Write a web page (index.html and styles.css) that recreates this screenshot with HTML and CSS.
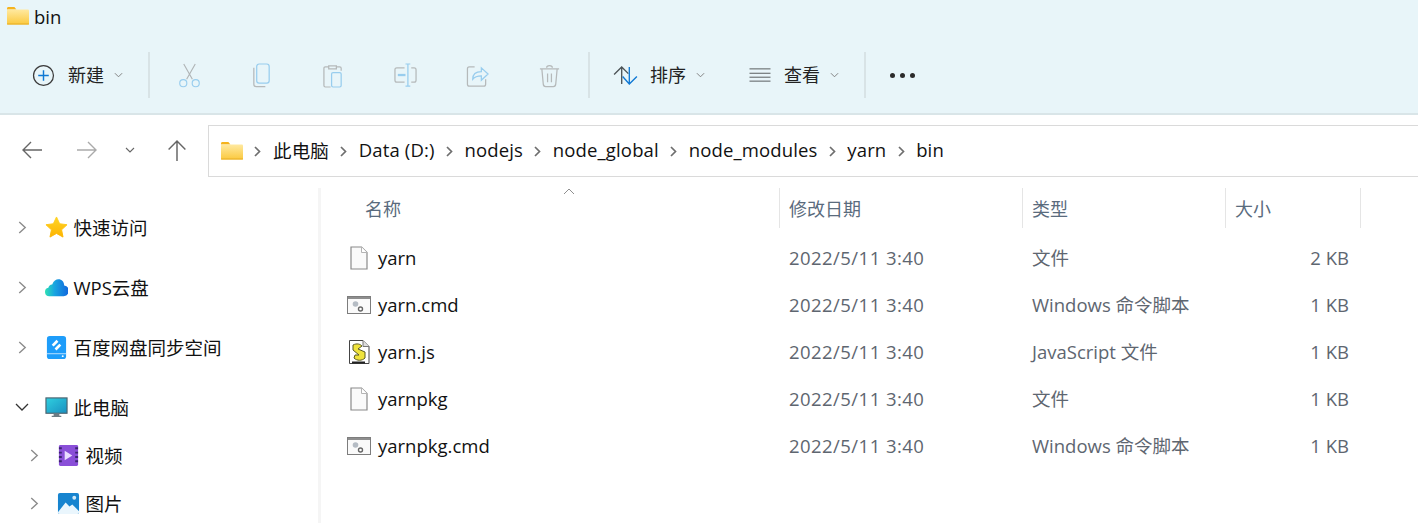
FILE: index.html
```html
<!DOCTYPE html>
<html lang="zh-CN">
<head>
  <meta charset="UTF-8" />
  <title>bin</title>
  <link rel="stylesheet" href="styles.css">
</head>
<body>
  <svg class="defs" width="0" height="0">
    <defs>
      <linearGradient id="folderFill" x1="0" y1="0" x2="0" y2="1">
        <stop offset="0" stop-color="#ffe9a0" />
        <stop offset="1" stop-color="#fbc93e" />
      </linearGradient>
      <linearGradient id="starFill" x1="0" y1="0" x2="0" y2="1">
        <stop offset="0" stop-color="#ffd427" />
        <stop offset="1" stop-color="#fdb400" />
      </linearGradient>
      <linearGradient id="cloudFill" x1="0" y1="0" x2="1" y2="0">
        <stop offset="0" stop-color="#2ee0b4" />
        <stop offset="0.4" stop-color="#18a5e0" />
        <stop offset="1" stop-color="#1166dd" />
      </linearGradient>
      <linearGradient id="screenFill" x1="0" y1="0" x2="1" y2="1">
        <stop offset="0" stop-color="#2fd0e0" />
        <stop offset="1" stop-color="#1a8fc0" />
      </linearGradient>
      <symbol id="folder" viewBox="0 0 22 18">
        <path d="M0 1.500C0 .7.6 0 1.400 0h6l2 2.500H0z" fill="#f5b31d" />
        <rect x="0" y="2.500" width="22" height="15" rx="1" fill="url(#folderFill)" />
        <rect x="0" y="16.500" width="22" height="1" fill="#e8ad24" />
      </symbol>
      <symbol id="blank" viewBox="0 0 18 24">
        <path d="M1 1h10.500L17 6.500V23H1z" fill="#fafafa" stroke="#8a8a8a" stroke-width="1.200" />
        <path d="M11.500 1v5.500H17" fill="#fff" stroke="#b4b4b4" />
      </symbol>
      <symbol id="cmd" viewBox="0 0 24 18">
        <rect x=".5" y=".5" width="23" height="17" fill="#fafafa" stroke="#7d7d7d" />
        <rect x="1" y="1" width="22" height="2" fill="#8e8e8e" />
        <circle cx="8.500" cy="8" r="2.800" fill="#b5bcc4" />
        <circle cx="13.500" cy="13" r="2" fill="#fff" stroke="#666" stroke-width="1.400" />
      </symbol>
      <symbol id="script" viewBox="0 0 21 24">
        <path d="M.5.500H14l6 6v17H.500z" fill="#fff" stroke="#444" />
        <path d="M14 .5v6h6" fill="#ddd" stroke="#777" />
        <path d="M4 5c4-2 7-1 9 1l-4 3 7 3v6c-3 3-8 3-11 0l1-3h4L4 10z" fill="#efe33c" stroke="#5a5a20" />
        <path d="M3 21.500h13v2H3z" fill="#222" />
      </symbol>
      <symbol id="crumb" viewBox="0 0 7 11">
        <path d="M1 1l4.500 4.500L1 10" fill="none" stroke="#6e6e6e" stroke-width="1.700" />
      </symbol>
    </defs>
  </svg>

  <header class="ribbon">
    <div class="title-row">
      <svg class="icon-folder"><use href="#folder" /></svg>
      <span class="title-text">bin</span>
    </div>
    <div class="toolbar">
      <div class="tool tool-new">
        <svg class="tool-icon" viewBox="0 0 24 24" fill="none">
          <circle cx="12" cy="12" r="10.400" stroke="#3c3c3c" stroke-width="1.300" />
          <path d="M12 6.500v11M6.500 12h11" stroke="#0f78d4" stroke-width="1.500" />
        </svg>
        <span class="tool-label">新建</span>
        <svg class="caret" viewBox="0 0 10 6" fill="none"><path d="M1 1l4 4 4-4" stroke="#777" /></svg>
      </div>
      <i class="sep sep-a"></i>
      <div class="tool-set">
        <svg class="tool-icon" viewBox="0 0 24 26" fill="none" stroke-width="1.200">
          <path d="M6 1l9 16M18 1L9 17" stroke="#b0b5b7" />
          <circle cx="5.500" cy="21" r="3.700" stroke="#98cdee" />
          <circle cx="18.500" cy="21" r="3.700" stroke="#98cdee" />
        </svg>
        <svg class="tool-icon" viewBox="0 0 24 26" fill="none" stroke-width="1.300">
          <path d="M4 5v17c0 1.500 1 2.500 2.500 2.500H16" stroke="#b5b9ba" />
          <rect x="7" y="1" width="13" height="20" rx="2.500" stroke="#98cdee" />
        </svg>
        <svg class="tool-icon" viewBox="0 0 24 26" fill="none" stroke-width="1.300">
          <path d="M7 4H3.500C2.500 4 2 4.500 2 5.500v18c0 1 .5 1.500 1.500 1.500H9M15 4h3.500c1 0 1.500.5 1.500 1.500V8M7 3h8v3H7z" stroke="#b5b9ba" />
          <rect x="10" y="10" width="10" height="15" rx="1.500" stroke="#98cdee" />
        </svg>
        <svg class="tool-icon" viewBox="0 0 24 26" fill="none" stroke-width="1.300">
          <path d="M11 5H3C1.500 5 1 6 1 7v11c0 1 .5 2 2 2h8M18 5h3c1.500 0 2 1 2 2v11c0 1-.5 2-2 2h-3" stroke="#b5b9ba" />
          <path d="M4 12.500h8" stroke="#98cdee" stroke-width="2.400" />
          <path d="M12 1h5M12 24h5M14.500 1v23" stroke="#98cdee" />
        </svg>
        <svg class="tool-icon" viewBox="0 0 24 26" fill="none" stroke-width="1.300">
          <path d="M9 4H3.500C2 4 1.500 5 1.500 6v16c0 1 .5 2 2 2h15c1.500 0 2-1 2-2v-5" stroke="#b5b9ba" />
          <path d="M7 17c0-5 3-8 9-8V5l7 6.500L16 18v-4.500c-4 0-7 1-9 3.500z" stroke="#98cdee" />
        </svg>
        <svg class="tool-icon" viewBox="0 0 24 26" fill="none" stroke="#b5b9ba" stroke-width="1.300">
          <path d="M2 6h20M9 5c0-3 6-3 6 0M4 6l1.500 16c.1 1.500 1 2.500 2.500 2.500h8c1.500 0 2.400-1 2.500-2.500L20 6M10 11v9M14 11v9" />
        </svg>
      </div>
      <i class="sep sep-b"></i>
      <div class="tool tool-sort">
        <svg class="tool-icon" viewBox="0 0 26 20" fill="none" stroke-width="1.400">
          <path d="M9 19V1.500M1 9l8-8 7 7" stroke="#4c5356" />
          <path d="M17 1v17.500M10 11l7 8 8-8" stroke="#0f78d4" />
        </svg>
        <span class="tool-label">排序</span>
        <svg class="caret" viewBox="0 0 10 6" fill="none"><path d="M1 1l4 4 4-4" stroke="#777" /></svg>
      </div>
      <div class="tool tool-view">
        <svg class="tool-icon" viewBox="0 0 24 16" fill="none" stroke="#53585a" stroke-width="1.100">
          <path d="M0 1h24M0 6h24M0 10.500h24M0 15h24" />
        </svg>
        <span class="tool-label">查看</span>
        <svg class="caret" viewBox="0 0 10 6" fill="none"><path d="M1 1l4 4 4-4" stroke="#777" /></svg>
      </div>
      <i class="sep sep-c"></i>
      <div class="more"><b></b><b></b><b></b></div>
    </div>
  </header>

  <div class="nav-row">
    <div class="nav-buttons">
      <svg class="nav-back" viewBox="0 0 20 18" fill="none" stroke="#666" stroke-width="1.400"><path d="M20 9H1M9 1L1 9l8 8" /></svg>
      <svg class="nav-forward" viewBox="0 0 20 18" fill="none" stroke="#aaa" stroke-width="1.400"><path d="M0 9h19M11 1l8 8-8 8" /></svg>
      <svg class="nav-recent" viewBox="0 0 10 6" fill="none"><path d="M1 1l4 4 4-4" stroke="#666" stroke-width="1.100" /></svg>
      <svg class="nav-up" viewBox="0 0 18 20" fill="none" stroke="#666" stroke-width="1.400"><path d="M9 20V1M1 9l8-8 8 8" /></svg>
    </div>
    <div class="address">
      <svg class="icon-folder address-folder"><use href="#folder" /></svg>
      <svg class="crumb-sep"><use href="#crumb" /></svg><span class="crumb">此电脑</span>
      <svg class="crumb-sep"><use href="#crumb" /></svg><span class="crumb">Data (D:)</span>
      <svg class="crumb-sep"><use href="#crumb" /></svg><span class="crumb">nodejs</span>
      <svg class="crumb-sep"><use href="#crumb" /></svg><span class="crumb">node_global</span>
      <svg class="crumb-sep"><use href="#crumb" /></svg><span class="crumb">node_modules</span>
      <svg class="crumb-sep"><use href="#crumb" /></svg><span class="crumb">yarn</span>
      <svg class="crumb-sep"><use href="#crumb" /></svg><span class="crumb">bin</span>
    </div>
  </div>

  <div class="main">
    <aside class="sidebar">
      <div class="side-item">
        <svg class="chev" viewBox="0 0 8 12" fill="none"><path d="M1 1l5.500 5L1 11" stroke="#8c8c8c" stroke-width="1.300" /></svg>
        <svg class="side-icon" viewBox="0 0 24 24"><path d="M12 1l3.300 7.100 7.700 1-5.700 5.300 1.500 7.600-6.800-3.800L5.200 22l1.500-7.600L1 9.100l7.700-1z" fill="url(#starFill)" stroke="url(#starFill)" stroke-linejoin="round" /></svg>
        <span>快速访问</span>
      </div>
      <div class="side-item">
        <svg class="chev" viewBox="0 0 8 12" fill="none"><path d="M1 1l5.500 5L1 11" stroke="#8c8c8c" stroke-width="1.300" /></svg>
        <svg class="side-icon" viewBox="0 0 24 24"><path d="M4.500 21a4.400 4.400 0 0 1-1-8.700C4 10 5.500 8.700 7.500 8.800 9 5.300 11.500 3.500 14 3.500c3.500 0 6 2.600 6 6.400a5.600 5.600 0 0 1-.5 11.100z" fill="url(#cloudFill)" /></svg>
        <span>WPS云盘</span>
      </div>
      <div class="side-item">
        <svg class="chev" viewBox="0 0 8 12" fill="none"><path d="M1 1l5.500 5L1 11" stroke="#8c8c8c" stroke-width="1.300" /></svg>
        <svg class="side-icon" viewBox="0 0 24 24">
          <rect x="2" y="0" width="20" height="24" rx="3" fill="#1e9dfa" />
          <path d="M12 4l-5 5 2 2 3-3 2-2zM12 15l5-5-2-2-3 3-2 2z" fill="#fff" />
          <path d="M2 18.500h20" stroke="#bfe3ff" />
          <circle cx="18.500" cy="21" r="1" fill="#fff" />
        </svg>
        <span>百度网盘同步空间</span>
      </div>
      <div class="side-item side-pc">
        <svg class="chev chev-open" viewBox="0 0 14 8" fill="none"><path d="M1 1l6 6 6-6" stroke="#333" stroke-width="1.300" /></svg>
        <svg class="side-icon" viewBox="0 0 24 24">
          <rect x="1" y="2" width="22" height="16" fill="url(#screenFill)" stroke="#4d6470" stroke-width="1.200" />
          <path d="M9 18.500h6v2H9zM7 20.500h10V22H7z" fill="#6d7c84" />
        </svg>
        <span>此电脑</span>
      </div>
      <div class="side-item side-sub">
        <svg class="chev" viewBox="0 0 8 12" fill="none"><path d="M1 1l5.500 5L1 11" stroke="#8c8c8c" stroke-width="1.300" /></svg>
        <svg class="side-icon" viewBox="0 0 24 24">
          <rect x="2" y="1" width="20" height="22" rx="1.500" fill="#8a4fd8" />
          <path d="M2 4.500h3M2 9h3M2 13.500h3M2 18h3M19 4.500h3M19 9h3M19 13.500h3M19 18h3" stroke="#3c2470" stroke-width="2" />
          <path d="M8 7v10l8-5z" fill="#eadcff" />
        </svg>
        <span>视频</span>
      </div>
      <div class="side-item side-sub">
        <svg class="chev" viewBox="0 0 8 12" fill="none"><path d="M1 1l5.500 5L1 11" stroke="#8c8c8c" stroke-width="1.300" /></svg>
        <svg class="side-icon" viewBox="0 0 24 24">
          <rect x="1" y="1" width="22" height="22" rx="2" fill="#1784cf" />
          <path d="M1 21l8-10 4 4 3-2 7 7v1a2 2 0 0 1-2 2H3a2 2 0 0 1-2-2z" fill="#eaf6fd" />
          <circle cx="18" cy="6" r="2" fill="#cfe9f9" />
        </svg>
        <span>图片</span>
      </div>
    </aside>

    <section class="files">
      <svg class="sort-mark" viewBox="0 0 12 7" fill="none"><path d="M1 6l5-5 5 5" stroke="#8f8f8f" /></svg>
      <div class="file-head file-grid">
        <div class="head-cell head-name">名称</div>
        <div class="head-cell">修改日期</div>
        <div class="head-cell">类型</div>
        <div class="head-cell">大小</div>
      </div>
      <div class="file-row file-grid">
        <div class="file-name"><span class="file-icon"><svg class="ico-blank"><use href="#blank" /></svg></span>yarn</div>
        <div class="file-meta file-date">2022/5/11 3:40</div>
        <div class="file-meta file-type">文件</div>
        <div class="file-meta file-size">2 KB</div>
      </div>
      <div class="file-row file-grid">
        <div class="file-name"><span class="file-icon"><svg class="ico-cmd"><use href="#cmd" /></svg></span>yarn.cmd</div>
        <div class="file-meta file-date">2022/5/11 3:40</div>
        <div class="file-meta file-type">Windows 命令脚本</div>
        <div class="file-meta file-size">1 KB</div>
      </div>
      <div class="file-row file-grid">
        <div class="file-name"><span class="file-icon"><svg class="ico-script"><use href="#script" /></svg></span>yarn.js</div>
        <div class="file-meta file-date">2022/5/11 3:40</div>
        <div class="file-meta file-type">JavaScript 文件</div>
        <div class="file-meta file-size">1 KB</div>
      </div>
      <div class="file-row file-grid">
        <div class="file-name"><span class="file-icon"><svg class="ico-blank"><use href="#blank" /></svg></span>yarnpkg</div>
        <div class="file-meta file-date">2022/5/11 3:40</div>
        <div class="file-meta file-type">文件</div>
        <div class="file-meta file-size">1 KB</div>
      </div>
      <div class="file-row file-grid">
        <div class="file-name"><span class="file-icon"><svg class="ico-cmd"><use href="#cmd" /></svg></span>yarnpkg.cmd</div>
        <div class="file-meta file-date">2022/5/11 3:40</div>
        <div class="file-meta file-type">Windows 命令脚本</div>
        <div class="file-meta file-size">1 KB</div>
      </div>
    </section>
  </div>
</body>
</html>
```

FILE: styles.css
```css
* {
  box-sizing: border-box;
}

html, body {
  margin: 0;
  height: 523px;
  overflow: hidden;
}

body {
  font-family: "Open Sans", "Noto Sans CJK SC", sans-serif;
  font-size: 18.5px;
  color: #111;
  background-color: #fff;
}

.defs {
  display: block;
  height: 0;
}

/* ribbon */
.ribbon {
  height: 115px;
  background-color: #e8f5f9;
  border-bottom: 2px solid #d9e5e8;
}

.title-row {
  display: flex;
  align-items: center;
  height: 32px;
  padding-left: 7px;
}

.icon-folder {
  width: 22px;
  height: 18px;
  flex-shrink: 0;
}

.title-text {
  margin-left: 5px;
  padding-top: 2px;
  line-height: 32px;
}

.toolbar {
  display: flex;
  align-items: center;
  height: 46px;
  margin-top: 20px;
}

.tool {
  display: flex;
  align-items: center;
  font-size: 18px;
  color: #222;
}

.tool-new {
  width: 148px;
  padding-left: 32px;
}

.tool-new .tool-icon {
  width: 23px;
  height: 23px;
  flex-shrink: 0;
}

.tool-label {
  margin-left: 13px;
  margin-top: -2px;
  white-space: nowrap;
}

.caret {
  width: 9px;
  height: 6px;
  margin-left: 10px;
  flex-shrink: 0;
}

.sep {
  width: 2px;
  height: 46px;
  background-color: #d8e3e6;
  flex-shrink: 0;
}

.tool-set {
  display: flex;
  align-items: center;
  width: 438px;
  padding-left: 28px;
  gap: 49px;
}

.tool-set .tool-icon {
  width: 23px;
  height: 25px;
  flex-shrink: 0;
}

.tool-sort {
  width: 158px;
  padding-left: 23px;
}

.tool-sort .tool-icon {
  width: 25px;
  height: 19px;
  flex-shrink: 0;
}

.tool-sort .tool-label {
  margin-left: 12px;
}

.tool-view {
  width: 116px;
}

.tool-view .tool-icon {
  width: 24px;
  height: 14px;
  flex-shrink: 0;
}

.tool-view .tool-label {
  margin-left: 12px;
}

.more {
  display: flex;
  gap: 5px;
  margin-left: 24px;
}

.more b {
  width: 5px;
  height: 5px;
  border-radius: 50%;
  background-color: #2b2b2b;
}

/* back/forward + address */
.nav-row {
  display: flex;
  height: 73px;
  padding-top: 10px;
}

.nav-buttons {
  display: flex;
  align-items: center;
  width: 208px;
  height: 50px;
  padding-left: 22px;
}

.nav-back {
  width: 20px;
  height: 18px;
}

.nav-forward {
  width: 20px;
  height: 18px;
  margin-left: 35px;
}

.nav-recent {
  width: 10px;
  height: 6px;
  margin-left: 28px;
}

.nav-up {
  width: 20px;
  height: 21px;
  margin-left: 32px;
}

.address {
  display: flex;
  align-items: center;
  flex: 1;
  height: 52px;
  margin-right: -4px;
  padding-left: 12px;
  padding-bottom: 3px;
  border: 1px solid #dadada;
  white-space: nowrap;
  letter-spacing: 0.15px;
}

.address-folder {
  margin-top: 2px;
}

.crumb-sep {
  width: 7px;
  height: 11px;
  margin: 3px 11.4px 0;
  flex-shrink: 0;
}

.address-folder + .crumb-sep {
  margin-left: 11px;
  margin-right: 12px;
}

/* left tree + file list */
.main {
  display: flex;
  height: 335px;
}

.sidebar {
  width: 321px;
  flex-shrink: 0;
  padding-top: 9px;
  border-right: 3px solid #f5f5f5;
}

.side-item {
  display: flex;
  align-items: center;
  height: 60px;
  padding-left: 18px;
  white-space: nowrap;
}

.side-item span {
  margin-left: 5.5px;
}

.side-sub {
  height: 48px;
  padding-left: 30px;
}

.side-pc {
  margin-bottom: -6px;
}

.chev {
  width: 9px;
  height: 13px;
  flex-shrink: 0;
  margin-right: 18px;
}

.chev-open {
  width: 14px;
  height: 8px;
  margin-left: -3px;
  margin-right: 16px;
}

.side-icon {
  width: 23px;
  height: 23px;
  flex-shrink: 0;
}

.files {
  position: relative;
  flex: 1;
}

.sort-mark {
  position: absolute;
  top: 0;
  left: 242px;
  width: 12px;
  height: 7px;
}

.file-grid {
  display: grid;
  grid-template-columns: 459px 243px 203px 135px;
}

.file-head {
  height: 46px;
  align-items: start;
}

.head-cell {
  height: 40px;
  line-height: 42px;
  padding-left: 9px;
  border-right: 1px solid #e5e5e5;
  color: #5a6b7d;
  font-size: 18px;
}

.head-name {
  padding-left: 44px;
}

.file-row {
  height: 47px;
  align-items: center;
}

.file-name {
  display: flex;
  align-items: center;
  padding-left: 25px;
  white-space: nowrap;
}

.file-icon {
  display: flex;
  justify-content: center;
  width: 26px;
  margin-right: 6px;
}

.ico-blank {
  width: 18px;
  height: 24px;
}

.ico-cmd {
  width: 24px;
  height: 18px;
}

.ico-script {
  width: 21px;
  height: 24px;
}

.file-meta {
  padding-left: 9px;
  color: #5e6670;
  white-space: nowrap;
}

.file-date {
  letter-spacing: 0.45px;
}

.file-type {
  padding-bottom: 2px;
}

.file-size {
  padding-left: 0;
  padding-right: 12px;
  text-align: right;
}
```
